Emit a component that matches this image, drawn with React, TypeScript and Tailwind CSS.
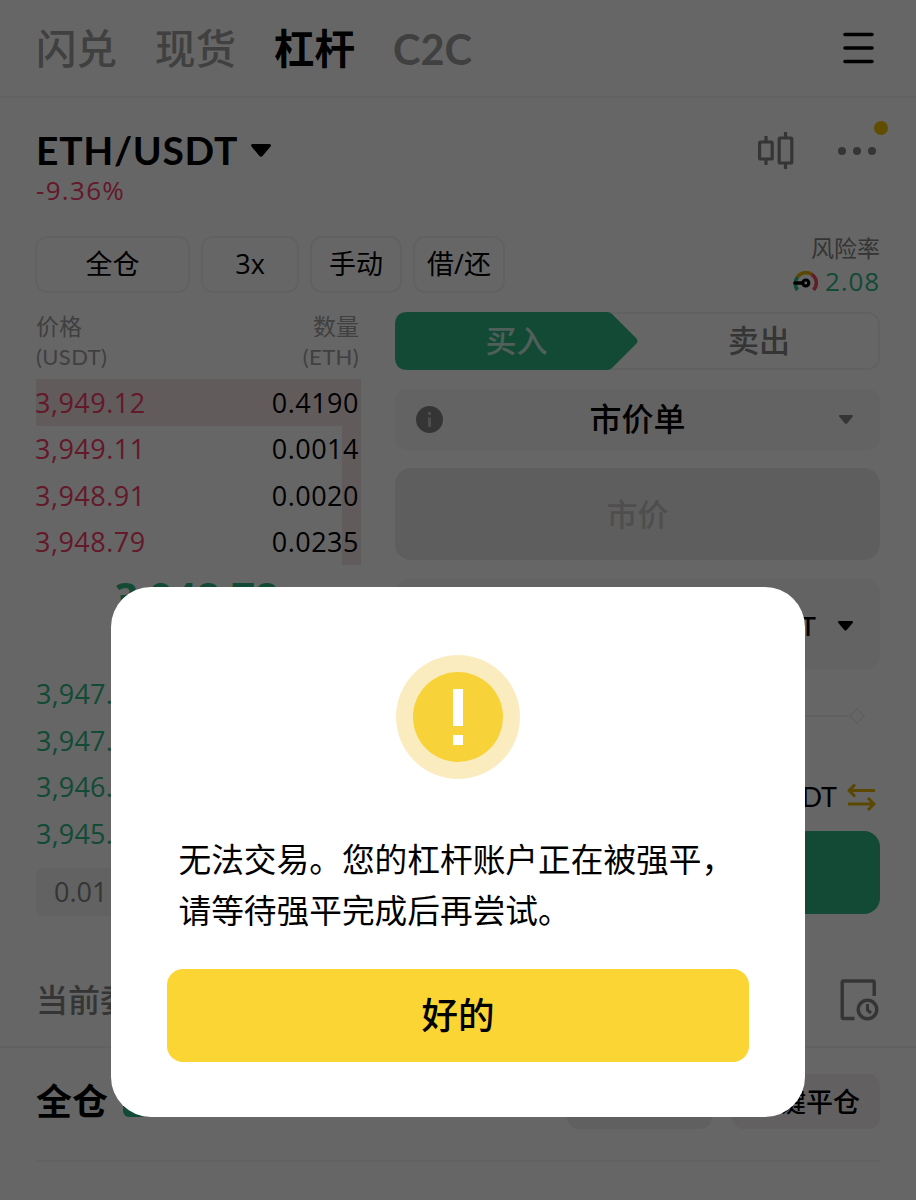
import React from 'react';
import clsx from 'clsx';

const TABS = ['闪兑', '现货', '杠杆', 'C2C'];

const MODES = [
    { label: '全仓', width: 'w-[155px]' },
    { label: '3x', width: 'w-[98px]' },
    { label: '手动', width: 'w-[92px]' },
    { label: '借/还', width: 'w-[92px]' },
];

const ASKS = [
    { price: '3,949.12', amount: '0.4190', depth: 100 },
    { price: '3,949.11', amount: '0.0014', depth: 6 },
    { price: '3,948.91', amount: '0.0020', depth: 6 },
    { price: '3,948.79', amount: '0.0235', depth: 6 },
];

const BIDS = ['3,947.', '3,947.', '3,946.', '3,945.'];

function Caret({ className }: { className?: string }) {
    return (
        <svg viewBox="0 0 20 13" className={className} fill="currentColor">
            <path d="M1.6 0h16.8c1.3 0 2 1.5 1.1 2.5l-8 9.6c-.8.9-2.2.9-3 0l-8-9.6C-.4 1.5.3 0 1.6 0z" />
        </svg>
    );
}

function CandleIcon() {
    return (
        <svg width="36" height="40" viewBox="0 0 36 40" fill="none" stroke="#848484" strokeWidth="3.2" strokeLinejoin="round">
            <rect x="1.6" y="11" width="12.6" height="17" rx="1" />
            <path d="M8 5v6M8 28v6" />
            <rect x="21.2" y="7" width="12.6" height="25" rx="1" />
            <path d="M27.5 1v6M27.5 32v6" />
        </svg>
    );
}

function GaugeIcon() {
    return (
        <svg width="25" height="22" viewBox="0 0 25 22" fill="none">
            <g strokeWidth="3.6">
                <path d="M4.5 20A10.3 10.3 0 0 1 4.6 7" stroke="#2db984" />
                <path d="M4.6 7A10.3 10.3 0 0 1 18.5 4.2" stroke="#e0b400" />
                <path d="M18.5 4.2A10.3 10.3 0 0 1 20.5 20" stroke="#f6465d" />
            </g>
            <path d="M2 13h8" stroke="#000" strokeWidth="3.6" strokeLinecap="round" />
            <circle cx="12.8" cy="13" r="3" stroke="#000" strokeWidth="3.2" fill="#fff" />
        </svg>
    );
}

function OrderHistoryIcon() {
    return (
        <svg width="40" height="42" viewBox="0 0 40 42" fill="none" stroke="#848484" strokeWidth="3.4">
            <path d="M14.5 39.5H3.7a1.5 1.5 0 0 1-1.5-1.5V3.5A1.5 1.5 0 0 1 3.7 2h29a1.5 1.5 0 0 1 1.5 1.5V17" />
            <circle cx="27.5" cy="30.5" r="9.3" />
            <path d="M27.5 25v6l3.5 3" strokeWidth="3" />
        </svg>
    );
}

function TransferIcon() {
    return (
        <svg width="29" height="28" viewBox="0 0 29 28" fill="none" stroke="#e0b400" strokeWidth="3">
            <path d="M28 7.5H2M8 1.5l-6 6 6 6M1 21h26M21 15l6 6-6 6" />
        </svg>
    );
}

function OrderBook() {
    return (
        <div className="w-[325px] shrink-0">
            <div className="flex h-[67px] justify-between text-[23px] leading-[30px] text-[#a0a0a0]">
                <div className="-mt-px">价格<br /><span className="font-['Lato'] text-[22px] tracking-[0.4px]">(USDT)</span></div>
                <div className="-mt-px pr-0.5 text-right">数量<br /><span className="font-['Lato'] text-[22px] tracking-[0.4px]">(ETH)</span></div>
            </div>
            {ASKS.map((row) => (
                <div key={row.price} className="flex h-[46.5px] justify-end">
                    <div className="h-full bg-[#f5e3e6]" style={{ width: `${row.depth}%` }} />
                    <div className="absolute flex h-[48px] w-[325px] items-center justify-between pr-0.5 text-[27px] tracking-[0.5px]">
                        <span className="-ml-px text-[#f8406a]">{row.price}</span>
                        <span>{row.amount}</span>
                    </div>
                </div>
            ))}
            <div className="h-[106px] pt-1 pr-1 text-center text-[41px] leading-[56px] font-bold text-[#2db984]">3,948.78</div>
            {BIDS.map((price, i) => (
                <div key={i} className="flex h-[46.7px] items-center text-[27px] tracking-[0.2px] text-[#2db984]">
                    {price}
                </div>
            ))}
            <div className="mt-2.5 flex h-12 items-center rounded-lg bg-[#f5f5f5] px-[18px] text-[27px] text-[#848484]">0.01</div>
        </div>
    );
}

function OrderForm() {
    return (
        <div className="flex w-[485px] flex-col">
            <div className="relative flex h-[58px] items-center rounded-xl border-2 border-[#f3f3f3] text-center text-[31px] font-medium">
                <svg className="absolute -top-0.5 -left-0.5" width="243" height="58" viewBox="0 0 243 58" fill="#2db984">
                    <path d="M13 0h199q3 0 5 2l24 24q3 3 0 6l-24 24q-2 2-5 2H13Q0 58 0 45V13Q0 0 13 0z" />
                </svg>
                <div className="relative -mt-0.5 w-[239px] text-white/75">买入</div>
                <div className="-mt-0.5 flex-1 pl-1 text-[#848484]">卖出</div>
            </div>
            <div className="mt-[19px] flex h-[61px] items-center justify-between rounded-xl bg-[#f8f8f8] px-[21px]">
                <svg width="27" height="27" viewBox="0 0 27 27">
                    <circle cx="13.5" cy="13.5" r="13.5" fill="#848484" />
                    <path d="M12 6h3v3h-3zM12 11.5h3V21h-3z" fill="#c4c4c4" />
                </svg>
                <span className="-mt-0.5 text-[32px] font-medium">市价单</span>
                <span className="flex w-[27px] justify-center pl-px">
                    <Caret className="w-[14px] text-[#848484]" />
                </span>
            </div>
            <div className="mt-[18px] flex h-[92px] items-center justify-center rounded-2xl bg-[#ebebeb] text-[31px] font-medium text-[#c4c4c4]">市价</div>
            <div className="mt-[18px] flex h-[92px] items-center justify-end rounded-2xl bg-[#f8f8f8] pt-1 pr-[27px]">
                <span className="mr-[22px] pt-px font-['Lato'] text-[27px] font-medium">USDT</span>
                <Caret className="w-[15px]" />
            </div>
            <div className="mt-[37px] flex h-[18px] items-center pr-[17px]">
                <div className="h-0.5 flex-1 bg-[#f0f0f0]" />
                <div className="size-3 rotate-45 border-2 border-[#f0f0f0]" />
            </div>
            <div className="mt-[52px] flex h-10 items-center justify-end gap-2.5 pr-1 font-['Lato'] text-[27px]">
                USDT <TransferIcon />
            </div>
            <div className="mt-3.5 h-[83px] rounded-2xl bg-[#2db984]" />
        </div>
    );
}

function LiquidationDialog() {
    return (
        <div className="absolute inset-0 flex items-start justify-center bg-black/60 pt-[587px]">
            <div className="flex h-[530px] w-[694px] flex-col items-center rounded-[40px] bg-white px-14 pt-[68px]">
                <div className="flex size-[124px] items-center justify-center rounded-full bg-[#fbecc0]">
                    <div className="flex size-[90px] flex-col items-center justify-center gap-[9px] rounded-full bg-[#f8d239]">
                        <div className="h-[37px] w-[10px] bg-white" />
                        <div className="h-[10px] w-[10px] bg-white" />
                    </div>
                </div>
                <p className="mt-[55px] w-[559px] text-[32.7px] leading-[51px] whitespace-nowrap">
                    无法交易。您的杠杆账户正在被强平，
                    <br />
                    请等待强平完成后再尝试。
                </p>
                <button className="mt-[33px] h-[93px] w-full rounded-2xl bg-[#fbd534] text-[36.5px] font-medium">好的</button>
            </div>
        </div>
    );
}

export default function App() {
    return (
        <div className="relative h-[1200px] w-[916px] overflow-hidden bg-white font-['Open_Sans','Noto_Sans_CJK_SC',sans-serif] text-black">
            <header className="flex h-[98px] items-center border-b-2 border-[#f5f5f5] px-9">
                <nav className="flex items-center gap-[38px] pt-0.5 text-[40.5px] font-medium">
                    {TABS.map((tab) => (
                        <span key={tab} className={clsx(tab === '杠杆' ? 'font-bold text-black' : 'text-[#a0a0a0]', tab === 'C2C' && "font-['Lato'] text-[41.5px] font-bold")}>
                            {tab}
                        </span>
                    ))}
                </nav>
                <svg className="mr-1.5 ml-auto" width="31" height="32" viewBox="0 0 31 32" stroke="#000" strokeWidth="3.6" strokeLinecap="round">
                    <path d="M2 2.5h27M2 16h27M2 29.5h27" />
                </svg>
            </header>

            <section className="flex h-[138px] justify-between px-9 pt-[29px]">
                <div>
                    <div className="-mt-0.5 flex items-center gap-[13px] font-['Lato'] text-[39px] leading-[50px] font-bold tracking-[0.7px]">
                        ETH/USDT <Caret className="w-5" />
                    </div>
                    <div className="pt-px text-[26px] leading-7 font-medium tracking-[1.3px] text-[#f8406a]">-9.36%</div>
                </div>
                <div className="flex items-start pt-1">
                    <CandleIcon />
                    <div className="relative mt-4 mr-1 ml-11 flex gap-[7px]">
                        {[0, 1, 2].map((i) => (
                            <div key={i} className="size-2 rounded-full bg-[#848484]" />
                        ))}
                        <div className="absolute -top-[26px] left-[36px] size-[14px] rounded-full bg-[#f0c000]" />
                    </div>
                </div>
            </section>

            <section className="flex h-[76px] items-start justify-between px-9">
                <div className="-ml-px flex gap-[11px]">
                    {MODES.map((mode) => (
                        <div key={mode.label} className={clsx('flex h-[57px] items-center justify-center rounded-xl border-2 border-[#f3f3f3] text-[27px]', mode.width)}>
                            {mode.label}
                        </div>
                    ))}
                </div>
                <div className="text-right text-[23px] leading-6 text-[#848484]">
                    风险率
                    <div className="mt-[5px] flex h-8 items-center justify-end gap-[7px] text-[26px] font-medium tracking-[0.9px] text-[#2db984]">
                        <GaugeIcon /> 2.08
                    </div>
                </div>
            </section>

            <section className="flex gap-[34px] px-9">
                <OrderBook />
                <OrderForm />
            </section>

            <section className="mt-[32px] flex h-[100px] items-center justify-between border-b-2 border-[#f3f3f3] px-9 pt-1.5">
                <span className="text-[32px] font-medium text-[#848484]">当前委托</span>
                <OrderHistoryIcon />
            </section>

            <section className="mx-9 flex h-[114px] items-center border-b-2 border-[#f5f5f5] pb-1">
                <span className="text-[36px] font-bold">全仓</span>
                <div className="mt-1.5 ml-[15px] size-6 rounded-md bg-[#2db984]" />
                <div className="ml-auto h-[55px] w-[145px] rounded-xl bg-[#f1f1f1]" />
                <div className="ml-5 flex h-[55px] w-[148px] items-center justify-center rounded-xl bg-[#f4f1f1] text-[27px] font-medium">一键平仓</div>
            </section>

            <LiquidationDialog />
        </div>
    );
}
